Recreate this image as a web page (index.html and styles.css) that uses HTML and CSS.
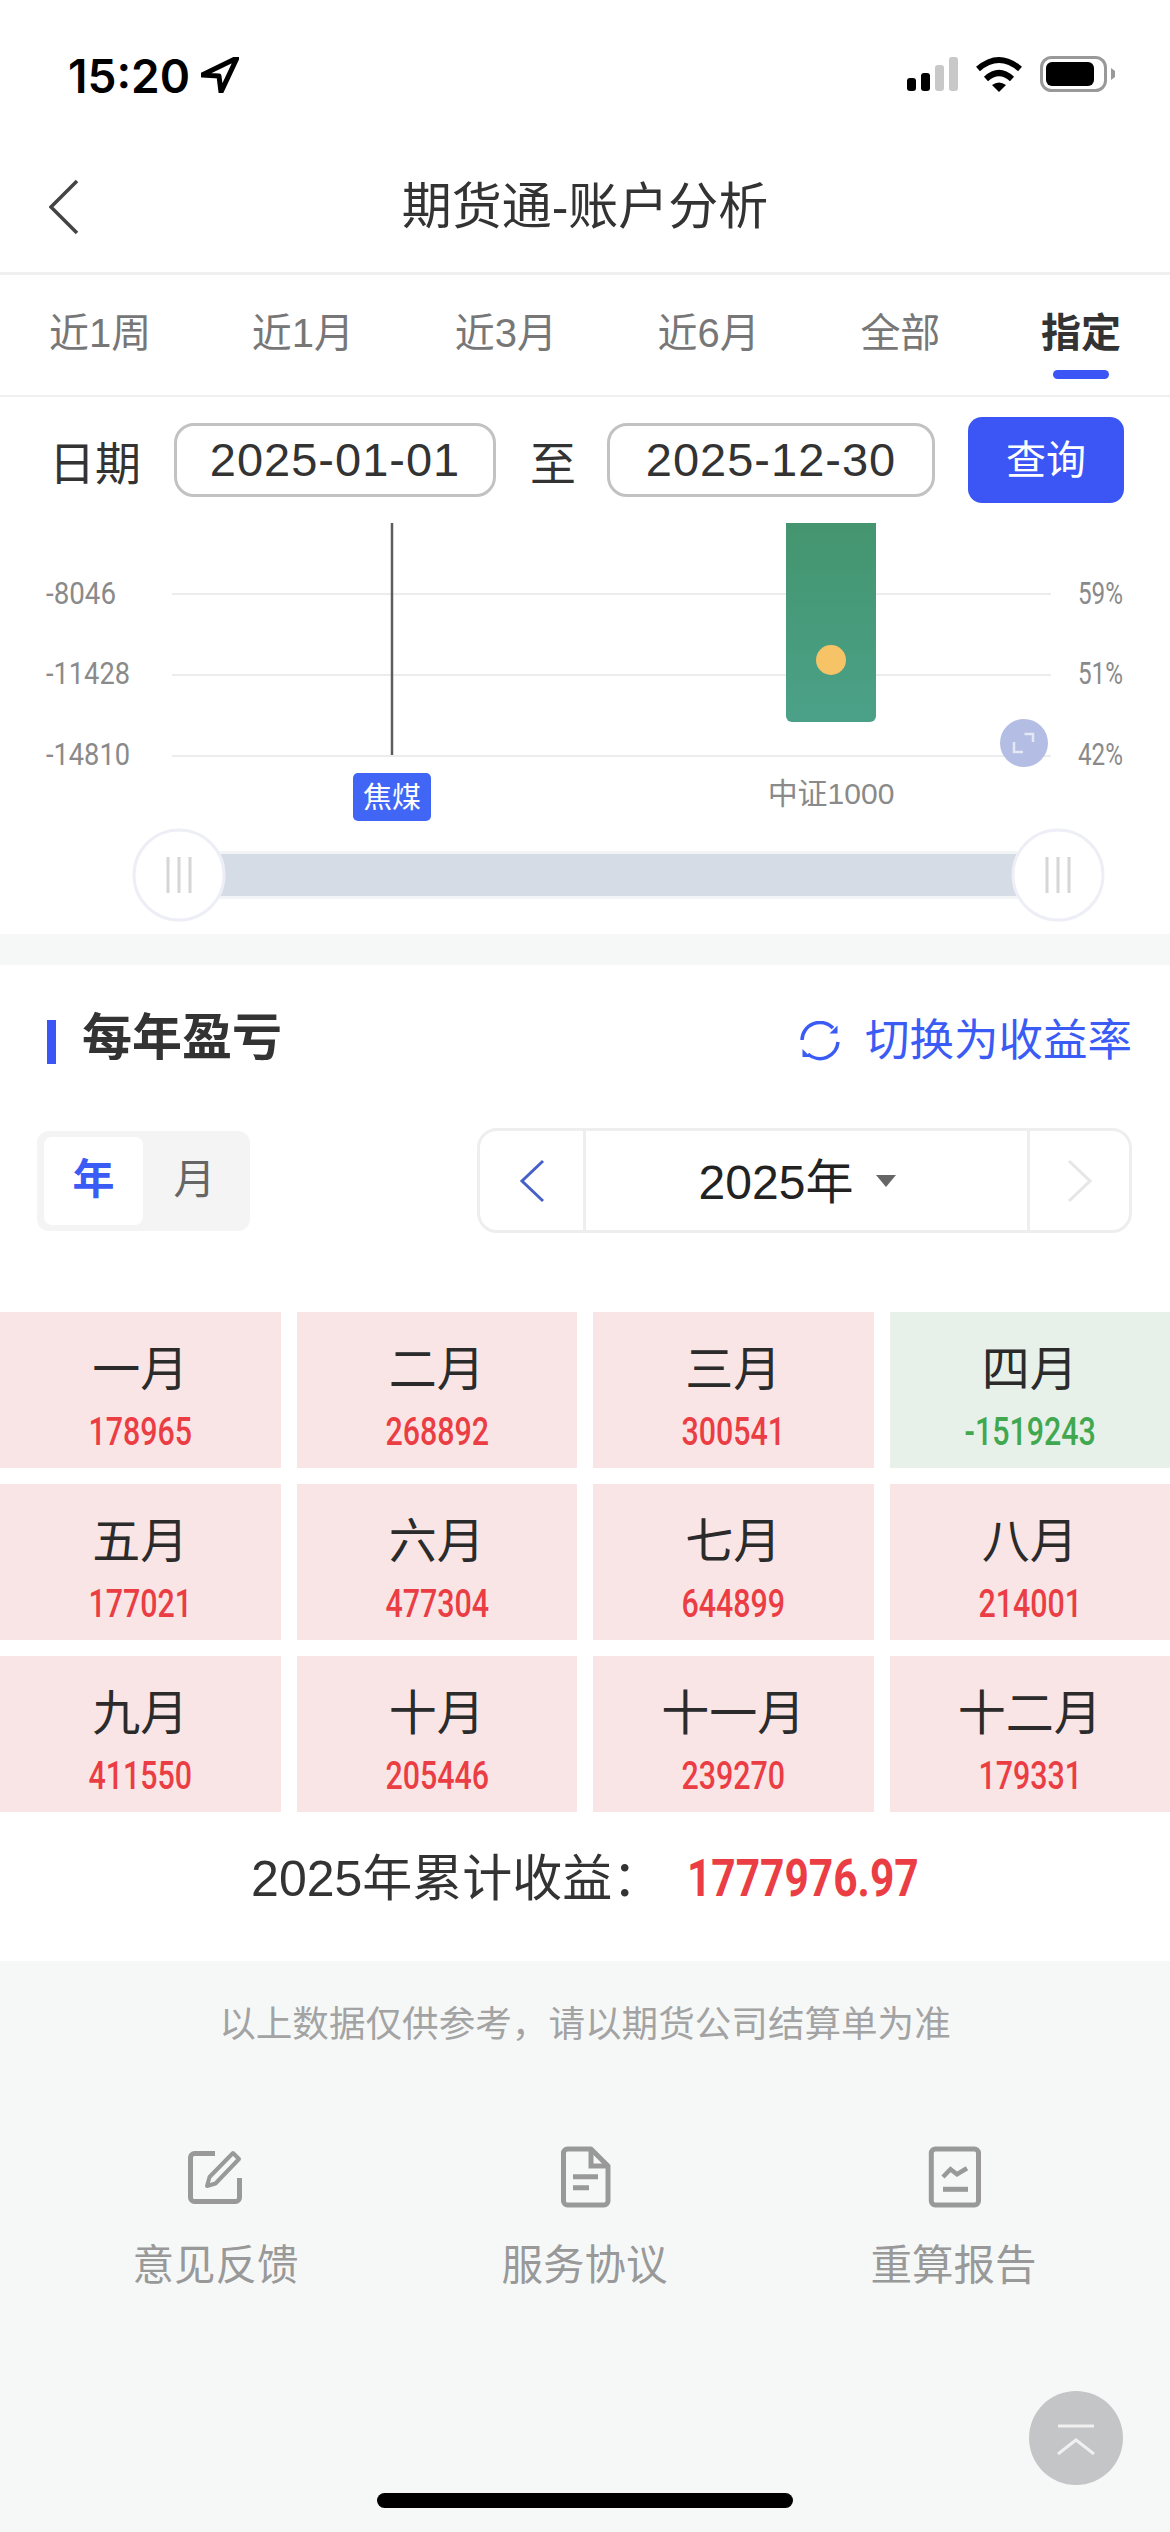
FILE: index.html
```html
<!DOCTYPE html>
<html lang="zh-CN">
<head>
    <meta charset="UTF-8">
    <title>期货通-账户分析</title>
    <link rel="stylesheet" href="styles.css">
</head>
<body>
    <div class="statusbar">
        <div class="time">15:20
            <svg class="loc" width="38" height="36" viewBox="0 0 38 36"><path d="M36 1 L1 18 L18 19 L20 35 Z" fill="none" stroke="#000" stroke-width="5" stroke-linejoin="round"/></svg>
        </div>
        <div class="status-icons">
            <svg class="ic-signal" width="52" height="36" viewBox="0 0 52 36">
                <rect x="0" y="22" width="9" height="13" rx="3" fill="#000"/>
                <rect x="14" y="17" width="9" height="18" rx="3" fill="#000"/>
                <rect x="28" y="9" width="9" height="26" rx="3" fill="#c8c8c8"/>
                <rect x="42" y="1" width="9" height="34" rx="3" fill="#c8c8c8"/>
            </svg>
            <svg class="ic-wifi" width="48" height="36" viewBox="0 0 48 36">
                <path d="M3 13 Q24 -5 45 13" fill="none" stroke="#000" stroke-width="6"/>
                <path d="M11 23 Q24 11 37 23" fill="none" stroke="#000" stroke-width="6"/>
                <path d="M17 29 Q24 24 31 29 L24 36 Z" fill="#000"/>
            </svg>
            <svg class="ic-battery" width="75" height="36" viewBox="0 0 75 36">
                <rect x="1.5" y="1.5" width="64" height="33" rx="10" fill="none" stroke="#999" stroke-width="3"/>
                <rect x="6" y="6" width="48" height="24" rx="6" fill="#000"/>
                <path d="M71 12 L75 15 V21 L71 24 Z" fill="#999"/>
            </svg>
        </div>
    </div>

    <div class="navbar">
        <svg class="nav-back" width="30" height="56" viewBox="0 0 30 56"><path d="M28 2 L2 28 L28 54" fill="none" stroke="#444" stroke-width="3.5"/></svg>
        <span>期货通-账户分析</span>
    </div>

    <ul class="tabs">
        <li>近1周</li>
        <li>近1月</li>
        <li>近3月</li>
        <li>近6月</li>
        <li>全部</li>
        <li class="on">指定</li>
    </ul>

    <div class="daterow">
        <span class="date-label">日期</span>
        <div class="date-input">2025-01-01</div>
        <span class="date-to">至</span>
        <div class="date-input last">2025-12-30</div>
        <a class="query-btn" href="javascript:;">查询</a>
    </div>

    <svg class="chart" width="1170" height="411" viewBox="0 523 1170 411">
        <g stroke="#ececee" stroke-width="2">
            <line x1="172" y1="594" x2="1051" y2="594"/>
            <line x1="172" y1="675" x2="1051" y2="675"/>
            <line x1="172" y1="756" x2="1051" y2="756"/>
        </g>
        <line x1="392" y1="523" x2="392" y2="755" stroke="#5c5c5c" stroke-width="2.5"/>
        <defs>
            <linearGradient id="bar" x1="0" y1="0" x2="0" y2="1">
                <stop offset="0" stop-color="#44956f"/>
                <stop offset="1" stop-color="#4ba188"/>
            </linearGradient>
        </defs>
        <path d="M786 523 H876 V716 a6 6 0 0 1 -6 6 H792 a6 6 0 0 1 -6 -6 Z" fill="url(#bar)"/>
        <circle cx="831" cy="660" r="15" fill="#f6c467"/>
        <g class="axis">
            <text x="46" y="604" textLength="70" lengthAdjust="spacingAndGlyphs">-8046</text>
            <text x="46" y="684" textLength="84" lengthAdjust="spacingAndGlyphs">-11428</text>
            <text x="46" y="765" textLength="84" lengthAdjust="spacingAndGlyphs">-14810</text>
            <text x="1078" y="604" textLength="45" lengthAdjust="spacingAndGlyphs">59%</text>
            <text x="1078" y="684" textLength="45" lengthAdjust="spacingAndGlyphs">51%</text>
            <text x="1078" y="765" textLength="45" lengthAdjust="spacingAndGlyphs">42%</text>
        </g>
        <circle cx="1024" cy="743" r="24" fill="#b4bee4"/>
        <path d="M1024.5 734 H1033 V742 M1014 742 V752 H1023" fill="none" stroke="#e4e8f5" stroke-width="2.5"/>
        <rect x="353" y="773" width="78" height="48" rx="5" fill="#4166f5"/>
        <text class="tag-text" x="392" y="808" text-anchor="middle">焦煤</text>
        <text class="name-text" x="831" y="804" text-anchor="middle">中证1000</text>
        <rect x="200" y="851" width="840" height="48" fill="#f3f4f6"/>
        <rect x="200" y="854" width="840" height="42" fill="#d5dce5"/>
        <g fill="#fff" stroke="#eeeff6" stroke-width="3">
            <circle cx="179" cy="875" r="45"/>
            <circle cx="1058" cy="875" r="45"/>
        </g>
        <g stroke="#d6d6d6" stroke-width="3">
            <path d="M168 857 v36 M179 857 v36 M190 857 v36"/>
            <path d="M1047 857 v36 M1058 857 v36 M1069 857 v36"/>
        </g>
    </svg>

    <div class="panel">
        <div class="panel-head">
            <h2 class="panel-title">每年盈亏</h2>
            <a class="switch" href="javascript:;">
                <svg width="40" height="40" viewBox="0 0 40 40" fill="none" stroke="#3b5bf5" stroke-width="3.5">
                    <path d="M2 19 A18 18 0 0 1 33 7"/>
                    <path d="M38 21 A18 18 0 0 1 8 33"/>
                    <path d="M37.5 4.5 V12.5 H29.5 Z" fill="#3b5bf5" stroke="none"/>
                    <path d="M2.5 28 V36 H10.5 Z" fill="#3b5bf5" stroke="none"/>
                </svg>
                切换为收益率
            </a>
        </div>

        <div class="controls">
            <div class="seg">
                <span class="seg-item on">年</span>
                <span class="seg-item">月</span>
            </div>
            <div class="picker">
                <div class="picker-arrow prev">
                    <svg width="26" height="44" viewBox="0 0 26 44"><path d="M24 2 L3 22 L24 42" fill="none" stroke="#4660c8" stroke-width="3"/></svg>
                </div>
                <div class="picker-year">2025年<i class="caret"></i></div>
                <div class="picker-arrow next">
                    <svg width="26" height="44" viewBox="0 0 26 44"><path d="M2 2 L23 22 L2 42" fill="none" stroke="#e6e6e6" stroke-width="3"/></svg>
                </div>
            </div>
        </div>

        <div class="months">
            <div class="month"><p>一月</p><b>178965</b></div>
            <div class="month"><p>二月</p><b>268892</b></div>
            <div class="month"><p>三月</p><b>300541</b></div>
            <div class="month loss"><p>四月</p><b>-1519243</b></div>
            <div class="month"><p>五月</p><b>177021</b></div>
            <div class="month"><p>六月</p><b>477304</b></div>
            <div class="month"><p>七月</p><b>644899</b></div>
            <div class="month"><p>八月</p><b>214001</b></div>
            <div class="month"><p>九月</p><b>411550</b></div>
            <div class="month"><p>十月</p><b>205446</b></div>
            <div class="month"><p>十一月</p><b>239270</b></div>
            <div class="month"><p>十二月</p><b>179331</b></div>
        </div>

        <div class="total">2025年累计收益：<b>1777976.97</b></div>
    </div>

    <div class="footer">
        <p class="note">以上数据仅供参考，请以期货公司结算单为准</p>
        <div class="links">
            <a class="link" href="javascript:;">
                <svg width="64" height="64" viewBox="0 0 64 64" fill="none" stroke="#999" stroke-width="5">
                    <path d="M31 8.5 H10.5 a4 4 0 0 0 -4 4 V52.5 a4 4 0 0 0 4 4 H51.5 a4 4 0 0 0 4 -4 V33"/>
                    <path d="M49 8 L55 14 L31.5 38.5 L23 41 L25.5 32 Z" stroke-width="4" stroke-linejoin="round"/>
                </svg>
                意见反馈
            </a>
            <a class="link" href="javascript:;">
                <svg width="64" height="64" viewBox="0 0 64 64" fill="none" stroke="#999" stroke-width="5">
                    <path d="M14.5 4 H38 L55 21 V56 a4 4 0 0 1 -4 4 H14.5 a4 4 0 0 1 -4 -4 V8 a4 4 0 0 1 4 -4 Z" stroke-linejoin="round"/>
                    <path d="M38 4 V21 H55"/>
                    <path d="M20 31.7 H45 M20 42.7 H36"/>
                </svg>
                服务协议
            </a>
            <a class="link" href="javascript:;">
                <svg width="64" height="64" viewBox="0 0 64 64" fill="none" stroke="#999" stroke-width="5">
                    <rect x="9.3" y="4" width="47.2" height="56" rx="4"/>
                    <path d="M21 32 L28.5 24.3 L35 29.3 L45 23.3" stroke-width="4.5"/>
                    <path d="M21 44.3 H46"/>
                </svg>
                重算报告
            </a>
        </div>
    </div>

    <a class="totop" href="javascript:;">
        <svg width="50" height="40" viewBox="0 0 50 40" fill="none" stroke="#f0f0f0" stroke-width="3">
            <path d="M7 8 H43"/>
            <path d="M7 36 L25 22 L43 36"/>
        </svg>
    </a>
    <div class="homebar"></div>
</body>
</html>
```
FILE: styles.css
```css
*{
    margin: 0;
    padding: 0;
    list-style: none;
    box-sizing: border-box;
}
html,body{
    width: 1170px;
    height: 2532px;
    overflow: hidden;
}
body{
    position: relative;
    background: #f6f8f8;
    font-family: "Liberation Sans", "Noto Sans CJK SC", sans-serif;
    color: #333;
}
a{
    text-decoration: none;
    color: inherit;
}

.statusbar{
    height: 150px;
    background: #fff;
    display: flex;
    justify-content: space-between;
    padding: 56px 55px 0 68px;
}
.time{
    display: flex;
    align-items: flex-start;
    gap: 11px;
    font: 600 46px/40px Inter, sans-serif;
    color: #000;
}
.time .loc{
    margin-top: 1px;
}
.status-icons{
    display: flex;
    align-items: flex-start;
}
.ic-wifi{
    margin-left: 16px;
}
.ic-battery{
    margin-left: 17px;
}

.navbar{
    height: 125px;
    background: #fff;
    border-bottom: 3px solid #f0f0f0;
    display: flex;
    align-items: center;
    justify-content: center;
    position: relative;
    font-size: 50px;
    color: #333;
    padding-bottom: 18px;
}
.nav-back{
    position: absolute;
    left: 49px;
    top: 29px;
}

.tabs{
    height: 122px;
    background: #fff;
    border-bottom: 2px solid #efefef;
    display: flex;
    justify-content: space-between;
    padding: 0 49px;
}
.tabs li{
    position: relative;
    font-size: 40px;
    line-height: 116px;
    color: #777;
}
.tabs li.on{
    font-weight: bold;
    color: #333;
}
.tabs li.on:after{
    content: "";
    position: absolute;
    left: 12px;
    right: 12px;
    top: 95px;
    height: 9px;
    border-radius: 5px;
    background: #3b56f5;
}

.daterow{
    height: 126px;
    background: #fff;
    display: flex;
    align-items: center;
    padding: 20px 0 20px 49px;
}
.date-label,.date-to{
    font-size: 46px;
    color: #333;
}
.date-input{
    width: 322px;
    height: 74px;
    margin-left: 33px;
    border: 3px solid #c2c2c2;
    border-radius: 20px;
    font-size: 47px;
    line-height: 68px;
    letter-spacing: 1px;
    text-align: center;
    color: #333;
}
.date-input.last{
    width: 328px;
}
.date-to{
    margin-left: 34px;
    margin-right: -2px;
}
.query-btn{
    width: 156px;
    height: 86px;
    margin-left: 33px;
    border-radius: 14px;
    background: #3b56f5;
    color: #fff;
    font-size: 40px;
    line-height: 86px;
    text-align: center;
}

.chart{
    display: block;
    background: #fff;
}
.axis text{
    font-family: "Roboto", sans-serif;
    font-size: 31px;
    fill: #8a8a8a;
}
.tag-text{
    font-size: 29px;
    fill: #fff;
}
.name-text{
    font-size: 30px;
    fill: #8a8a8a;
}

.panel{
    margin-top: 31px;
    background: #fff;
    height: 996px;
}
.panel-head{
    display: flex;
    justify-content: space-between;
    align-items: center;
    padding: 49px 38px 0 47px;
}
.panel-title{
    display: flex;
    gap: 26px;
    font-size: 50px;
    line-height: 44px;
    height: 48px;
    font-weight: bold;
    color: #333;
}
.panel-title:before{
    content: "";
    width: 9px;
    height: 44px;
    margin-top: 4px;
    background: #3b56f5;
}
.switch{
    display: flex;
    align-items: center;
    gap: 25px;
    margin-top: 3px;
    font-size: 44.5px;
    line-height: 48px;
    color: #3b5bf5;
}
.controls{
    display: flex;
    justify-content: space-between;
    align-items: center;
    margin-top: 63px;
    padding: 0 38px 0 37px;
}
.seg{
    width: 213px;
    height: 100px;
    padding: 6px 7px;
    border-radius: 12px;
    background: #f4f4f4;
    display: flex;
}
.seg-item{
    width: 99px;
    height: 88px;
    border-radius: 8px;
    font-size: 42px;
    line-height: 86px;
    text-align: center;
    color: #666;
    padding-left: 4px;
}
.seg-item.on{
    background: #fff;
    color: #3b5bf5;
    font-weight: bold;
    padding-left: 0;
}
.picker{
    width: 655px;
    height: 105px;
    border: 3px solid #eee;
    border-radius: 20px;
    display: flex;
}
.picker-arrow{
    display: flex;
    align-items: center;
    justify-content: center;
}
.picker-arrow.prev{
    width: 103px;
}
.picker-arrow.next{
    width: 99px;
}
.picker-year{
    flex: 1;
    border-left: 3px solid #eee;
    border-right: 3px solid #eee;
    display: flex;
    align-items: center;
    justify-content: center;
    gap: 23px;
    padding: 0 18px 6px 0;
    font-size: 48px;
    color: #222;
}
.caret{
    width: 0;
    height: 0;
    border-top: 12px solid #666;
    border-left: 10px solid transparent;
    border-right: 10px solid transparent;
    margin-top: 6px;
}
.months{
    display: grid;
    grid-template-columns: repeat(4, 1fr);
    grid-auto-rows: 156px;
    gap: 16px;
    margin-top: 79px;
}
.month{
    background: #fae5e6;
    text-align: center;
}
.month p{
    font-size: 48px;
    line-height: 56px;
    padding-top: 30px;
    color: #2b2b2b;
}
.month b{
    display: block;
    margin-top: 14px;
    font-family: Roboto, sans-serif;
    font-weight: 500;
    font-size: 38px;
    line-height: 40px;
    color: #ea3d44;
    transform: scaleX(.8);
}
.month.loss{
    background: #e7f1ea;
}
.month.loss b{
    color: #42a850;
}
.total{
    height: 134px;
    font-size: 50px;
    line-height: 134px;
    text-align: center;
    color: #333;
}
.total b{
    display: inline-block;
    margin: 0 -52px 0 25px;
    font-family: Roboto, sans-serif;
    font-weight: 700;
    font-size: 52px;
    color: #ea3d44;
    transform: scaleX(.817);
    transform-origin: left center;
}

.footer{
    padding-top: 39px;
}
.note{
    font-size: 36.6px;
    line-height: 50px;
    text-align: center;
    color: #a3a3a3;
}
.links{
    display: flex;
    margin-top: 95px;
    padding-left: 31px;
}
.link{
    width: 369px;
    display: flex;
    flex-direction: column;
    align-items: center;
    font-size: 41.5px;
    line-height: 50px;
    color: #999;
}
.link svg{
    margin-bottom: 32px;
}

.totop{
    position: absolute;
    left: 1029px;
    top: 2391px;
    width: 94px;
    height: 94px;
    border-radius: 50%;
    background: #c4c5c7;
    display: flex;
    align-items: center;
    justify-content: center;
}
.homebar{
    position: absolute;
    left: 377px;
    top: 2493px;
    width: 416px;
    height: 15px;
    border-radius: 8px;
    background: #000;
}
```
